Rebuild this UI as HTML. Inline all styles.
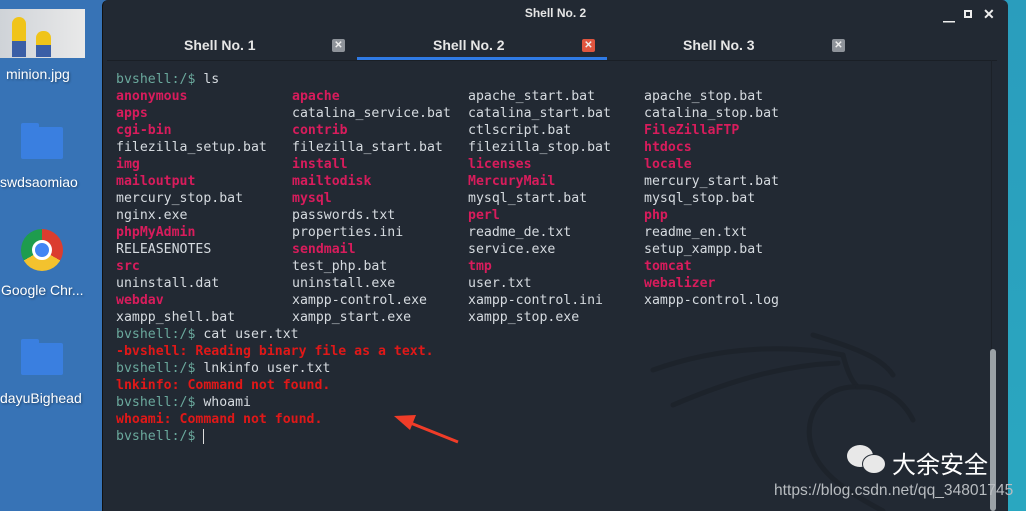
<!DOCTYPE html>
<html><head><meta charset="utf-8"><style>
*{margin:0;padding:0;box-sizing:border-box}
body{width:1026px;height:511px;overflow:hidden;position:relative;background:#3773b6;font-family:"Liberation Sans","Noto Sans CJK SC",sans-serif}
.right{position:absolute;left:1005px;top:0;width:21px;height:511px;background:linear-gradient(#2a9dbd,#2aa7c0)}
.win{position:absolute;left:102px;top:0;width:906px;height:511px;background:#222933;border-radius:6px 6px 0 0;border-left:1px solid #111}
.title{position:absolute;top:6px;width:100%;text-align:center;color:#e6e6e6;font-size:12px;font-weight:bold}
.ctl{position:absolute;top:8px;color:#eee;font-size:12px;font-weight:bold}
.tab{position:absolute;top:37px;color:#e6e6e6;font-size:14px;font-weight:bold}
.x{position:absolute;top:39px;width:13px;height:13px;border-radius:2px;background:#8e939a;color:#eee;font-size:10px;line-height:13px;text-align:center;font-weight:bold}
.term{position:absolute;left:116px;top:71px;font-family:"DejaVu Sans Mono","Liberation Mono",monospace;font-size:13.2px;line-height:17px;color:#d6dbe0;white-space:nowrap}
.term div{height:17px}
.term i{font-style:normal;display:inline-block;width:176px}
.g{color:#6aa89c}.d{color:#d81c5c;font-weight:bold}.r{color:#e01818;font-weight:bold}
.ic{position:absolute;color:#fff;font-size:14px;text-shadow:1px 1px 2px #0006}
.fold{position:absolute;left:21px;width:42px;height:32px;background:#3a7fe0;border-radius:2px}
.fold:before{content:"";position:absolute;left:0;top:-4px;width:18px;height:6px;background:#3a7fe0;border-radius:2px 2px 0 0}
</style></head><body>
<div style="position:absolute;left:0;top:9px;width:85px;height:49px;background:linear-gradient(90deg,#cfd3d8,#e9e9e9)">
<div style="position:absolute;left:12px;top:8px;width:14px;height:40px;background:#f0c419;border-radius:7px 7px 2px 2px"></div>
<div style="position:absolute;left:12px;top:32px;width:14px;height:16px;background:#3b5fa6"></div>
<div style="position:absolute;left:36px;top:22px;width:15px;height:26px;background:#f0c419;border-radius:7px 7px 2px 2px"></div>
<div style="position:absolute;left:36px;top:36px;width:15px;height:12px;background:#3b5fa6"></div>
</div>
<div class="ic" style="left:6px;top:66px">minion.jpg</div>
<div class="fold" style="top:127px"></div>
<div class="ic" style="left:0;top:174px">swdsaomiao</div>
<div style="position:absolute;left:21px;top:229px;width:42px;height:42px;border-radius:50%;background:conic-gradient(#db3d2f 0 120deg,#f3c22e 120deg 240deg,#1e9c4e 240deg 360deg)"><div style="position:absolute;left:11px;top:11px;width:20px;height:20px;border-radius:50%;background:#4285f4;border:3px solid #fff"></div></div>
<div class="ic" style="left:1px;top:282px">Google Chr...</div>
<div class="fold" style="top:343px"></div>
<div class="ic" style="left:0;top:390px">dayuBighead</div>
<div class="right"></div>
<div class="win">
<div class="title">Shell No. 2</div>
<div class="ctl" style="left:840px">▁</div>
<div style="position:absolute;left:861px;top:10px;width:8px;height:8px;border:2px solid #eee"></div>
<div class="ctl" style="left:880px;top:6px;font-size:14px">✕</div>
<div class="tab" style="left:81px">Shell No. 1</div>
<div class="x" style="left:229px">✕</div>
<div class="tab" style="left:330px">Shell No. 2</div>
<div class="x" style="left:479px;background:#e0553f">✕</div>
<div class="tab" style="left:580px">Shell No. 3</div>
<div class="x" style="left:729px">✕</div>
<div style="position:absolute;left:254px;top:57px;width:250px;height:3px;background:#2f7ae5"></div>
<div style="position:absolute;left:4px;top:60px;width:890px;height:1px;background:#1a1f26"></div>
<div style="position:absolute;left:888px;top:60px;width:1px;height:451px;background:#1c2128"></div>
<div style="position:absolute;left:887px;top:349px;width:6px;height:162px;background:#9aa1a6;border-radius:3px"></div>
<svg style="position:absolute;left:540px;top:325px" width="280" height="186" viewBox="0 0 280 186"><g fill="none" stroke="#1d232b" stroke-width="5" stroke-linecap="round"><path d="M10 45 C80 20 150 20 200 30"/><path d="M30 80 C100 50 150 40 195 38"/><path d="M200 30 C205 50 210 58 215 62"/><path d="M215 62 C180 60 160 90 168 120 C175 150 210 170 240 186"/><path d="M215 62 C240 60 260 75 270 95"/><path d="M170 10 C220 25 240 35 250 50"/></g></svg>
<div style="position:absolute;left:744px;top:445px;width:26px;height:22px;border-radius:50%;background:#e8e8e8"></div>
<div style="position:absolute;left:759px;top:454px;width:24px;height:20px;border-radius:50%;background:#e8e8e8;border:1px solid #222933"></div>
<div style="position:absolute;left:789px;top:448px;color:#fff;font-size:24px;font-family:'Noto Sans CJK SC',sans-serif;line-height:30px">大余安全</div>
<div style="position:absolute;left:671px;top:482px;color:#b8bcc0;font-size:15.6px">https://blog.csdn.net/qq_34801745</div>
</div>
<div class="term">
<div><span class="g">bvshell:/$</span> ls</div>
<div><i class="d">anonymous</i><i class="d">apache</i><i>apache_start.bat</i><i>apache_stop.bat</i></div>
<div><i class="d">apps</i><i>catalina_service.bat</i><i>catalina_start.bat</i><i>catalina_stop.bat</i></div>
<div><i class="d">cgi-bin</i><i class="d">contrib</i><i>ctlscript.bat</i><i class="d">FileZillaFTP</i></div>
<div><i>filezilla_setup.bat</i><i>filezilla_start.bat</i><i>filezilla_stop.bat</i><i class="d">htdocs</i></div>
<div><i class="d">img</i><i class="d">install</i><i class="d">licenses</i><i class="d">locale</i></div>
<div><i class="d">mailoutput</i><i class="d">mailtodisk</i><i class="d">MercuryMail</i><i>mercury_start.bat</i></div>
<div><i>mercury_stop.bat</i><i class="d">mysql</i><i>mysql_start.bat</i><i>mysql_stop.bat</i></div>
<div><i>nginx.exe</i><i>passwords.txt</i><i class="d">perl</i><i class="d">php</i></div>
<div><i class="d">phpMyAdmin</i><i>properties.ini</i><i>readme_de.txt</i><i>readme_en.txt</i></div>
<div><i>RELEASENOTES</i><i class="d">sendmail</i><i>service.exe</i><i>setup_xampp.bat</i></div>
<div><i class="d">src</i><i>test_php.bat</i><i class="d">tmp</i><i class="d">tomcat</i></div>
<div><i>uninstall.dat</i><i>uninstall.exe</i><i>user.txt</i><i class="d">webalizer</i></div>
<div><i class="d">webdav</i><i>xampp-control.exe</i><i>xampp-control.ini</i><i>xampp-control.log</i></div>
<div><i>xampp_shell.bat</i><i>xampp_start.exe</i><i>xampp_stop.exe</i></div>
<div><span class="g">bvshell:/$</span> cat user.txt</div>
<div><span class="r">-bvshell: Reading binary file as a text.</span></div>
<div><span class="g">bvshell:/$</span> lnkinfo user.txt</div>
<div><span class="r">lnkinfo: Command not found.</span></div>
<div><span class="g">bvshell:/$</span> whoami</div>
<div><span class="r">whoami: Command not found.</span></div>
<div><span class="g">bvshell:/$</span> <span style="border-left:1px solid #ddd">&nbsp;</span></div>
</div>
<svg style="position:absolute;left:390px;top:410px" width="72" height="36"><path d="M68 32 L18 12" stroke="#f03c28" stroke-width="3"/><path d="M4 6 L26 5 L20 20 Z" fill="#f03c28"/></svg>
</body></html>
